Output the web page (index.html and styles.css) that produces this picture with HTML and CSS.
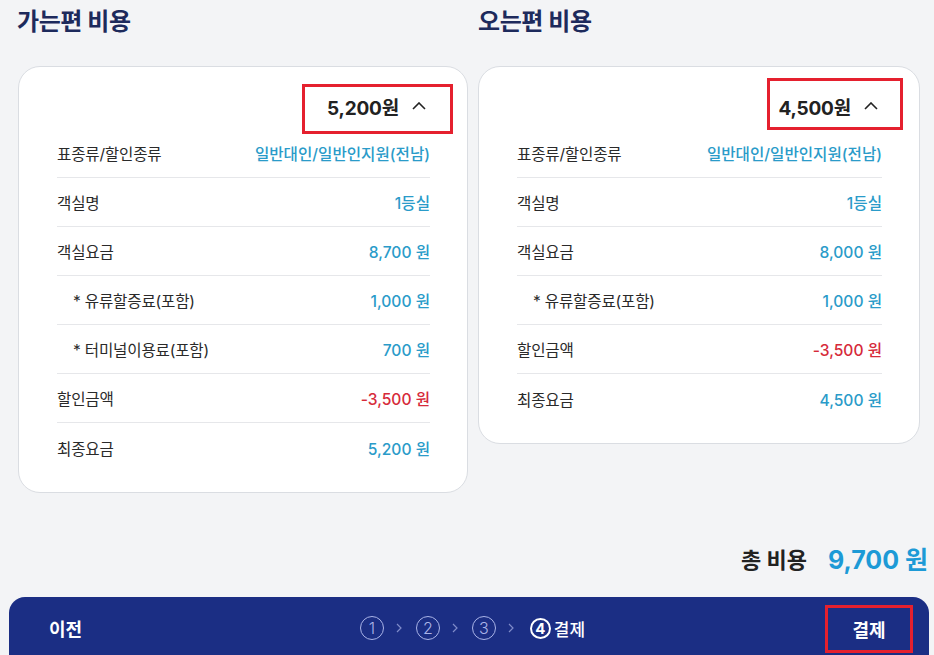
FILE: index.html
```html
<!DOCTYPE html>
<html lang="ko">
<head>
<meta charset="utf-8">
<link rel="stylesheet" href="styles.css">
</head>
<body>
<div class="columns">
  <section class="col col-left">
    <h2 class="title">가는편 비용</h2>
    <div class="card">
      <div class="card-head">
        <button class="toggle">5,200원 <svg class="caret" width="14" height="8" viewBox="0 0 14 8"><path d="M1 7 L7 1 L13 7" fill="none" stroke="#222" stroke-width="1.6"/></svg></button>
        <span class="mark mark-left"></span>
      </div>
      <div class="row"><span class="lbl">표종류/할인종류</span><span class="val">일반대인/일반인지원(전남)</span></div>
      <div class="row"><span class="lbl">객실명</span><span class="val">1등실</span></div>
      <div class="row"><span class="lbl">객실요금</span><span class="val">8,700 원</span></div>
      <div class="row"><span class="lbl sub">* 유류할증료(포함)</span><span class="val">1,000 원</span></div>
      <div class="row"><span class="lbl sub">* 터미널이용료(포함)</span><span class="val">700 원</span></div>
      <div class="row"><span class="lbl">할인금액</span><span class="val neg">-3,500 원</span></div>
      <div class="row"><span class="lbl">최종요금</span><span class="val">5,200 원</span></div>
    </div>
  </section>
  <section class="col col-right">
    <h2 class="title">오는편 비용</h2>
    <div class="card">
      <div class="card-head">
        <button class="toggle">4,500원 <svg class="caret" width="14" height="8" viewBox="0 0 14 8"><path d="M1 7 L7 1 L13 7" fill="none" stroke="#222" stroke-width="1.6"/></svg></button>
        <span class="mark mark-right"></span>
      </div>
      <div class="row"><span class="lbl">표종류/할인종류</span><span class="val">일반대인/일반인지원(전남)</span></div>
      <div class="row"><span class="lbl">객실명</span><span class="val">1등실</span></div>
      <div class="row"><span class="lbl">객실요금</span><span class="val">8,000 원</span></div>
      <div class="row"><span class="lbl sub">* 유류할증료(포함)</span><span class="val">1,000 원</span></div>
      <div class="row"><span class="lbl">할인금액</span><span class="val neg">-3,500 원</span></div>
      <div class="row"><span class="lbl">최종요금</span><span class="val">4,500 원</span></div>
    </div>
  </section>
</div>
<div class="total">
  <span class="total-lbl">총 비용</span>
  <span class="total-val">9,700 원</span>
</div>
<div class="bar">
  <span class="prev">이전</span>
  <div class="steps">
    <span class="step">1</span>
    <svg class="chev" width="6" height="10" viewBox="0 0 6 10"><path d="M1 1 L5 5 L1 9" fill="none" stroke="#7f8bc9" stroke-width="1.2"/></svg>
    <span class="step">2</span>
    <svg class="chev" width="6" height="10" viewBox="0 0 6 10"><path d="M1 1 L5 5 L1 9" fill="none" stroke="#7f8bc9" stroke-width="1.2"/></svg>
    <span class="step">3</span>
    <svg class="chev" width="6" height="10" viewBox="0 0 6 10"><path d="M1 1 L5 5 L1 9" fill="none" stroke="#7f8bc9" stroke-width="1.2"/></svg>
    <span class="step active">4</span><span class="step-name">결제</span>
  </div>
  <div class="next-wrap"><span class="next">결제</span></div>
</div>
</body>
</html>
```
FILE: styles.css
```css
* { box-sizing: border-box; }
html, body { margin: 0; padding: 0; }
body {
  width: 934px;
  height: 655px;
  overflow: hidden;
  background: #f3f4f6;
  font-family: Inter, "Noto Sans CJK KR", sans-serif;
  color: #222;
}
.columns {
  display: grid;
  grid-template-columns: 451px 442px;
  column-gap: 10px;
  align-items: start;
  padding: 6px 0 0 17px;
}
.title {
  margin: 0 0 28px;
  font-size: 24px;
  line-height: 32px;
  font-weight: 700;
  color: #1d2a5c;
  letter-spacing: -0.4px;
}
.col-left .card { margin-left: 1px; }
.card {
  position: relative;
  background: #fff;
  border: 1px solid #dadde2;
  border-radius: 22px;
  padding: 0 37px 20px 38px;
}
.col-right .card { padding-left: 38px; padding-right: 37px; }
.card-head {
  height: 62px;
  padding-top: 19px;
  display: flex;
  justify-content: flex-end;
  align-items: flex-start;
}
.toggle {
  height: 40px;
  display: flex;
  align-items: center;
  gap: 13px;
  padding: 0 4px 0 0;
  border: 0;
  background: none;
  font-family: inherit;
  font-size: 19px;
  font-weight: 700;
  color: #222;
  cursor: pointer;
  letter-spacing: -0.2px;
}
.caret { display: block; }
.mark {
  position: absolute;
  border: 3px solid #e5202e;
}
.mark-left { left: 283px; top: 17px; width: 151px; height: 50px; }
.mark-right { left: 288px; top: 11px; width: 136px; height: 52px; }
.row {
  height: 49px;
  display: flex;
  align-items: center;
  justify-content: space-between;
  border-bottom: 1px solid #e6e7ea;
  font-size: 15.6px;
}
.row:last-child { border-bottom: 0; }
.lbl { color: #2a2a2a; letter-spacing: -0.2px; }
.lbl.sub { padding-left: 16px; }
.val { color: #2a9bc9; font-weight: 500; }
.val.neg { color: #d62a3a; }
.total {
  display: flex;
  justify-content: flex-end;
  align-items: center;
  gap: 21px;
  height: 36px;
  margin-top: 47px;
  padding-right: 6px;
}
.total-lbl { font-size: 22px; font-weight: 700; color: #222; }
.total-val { font-size: 25px; font-weight: 700; color: #1d9ad6; }
.bar {
  margin: 21px 5px 0 9px;
  height: 80px;
  background: #1b2e84;
  border-radius: 16px 16px 0 0;
  display: grid;
  grid-template-columns: 1fr auto 1fr;
  align-items: start;
  padding: 0 16px;
}
.prev {
  height: 62px;
  display: flex;
  align-items: center;
  padding-left: 24px;
  color: #fff;
  font-size: 18px;
  font-weight: 700;
}
.steps {
  height: 62px;
  display: flex;
  align-items: center;
  margin-left: 7px;
}
.step {
  width: 24px;
  height: 24px;
  border-radius: 50%;
  border: 1.3px solid #aab4e8;
  color: #aab4e8;
  display: flex;
  align-items: center;
  justify-content: center;
  font-size: 16px;
  font-weight: 300;
  line-height: 1;
}
.chev { display: block; margin: 0 14px 0 12px; }
.step.active {
  border: 2px solid #fff;
  color: #fff;
  font-weight: 700;
  width: 21px;
  height: 21px;
  font-size: 15px;
  margin-left: 2px;
}
.step-name {
  margin-left: 3px;
  color: #fff;
  font-size: 17px;
  font-weight: 500;
}
.next-wrap {
  display: flex;
  justify-content: flex-end;
  padding-top: 8px;
}
.next {
  width: 88px;
  height: 48px;
  border: 3px solid #e5202e;
  display: flex;
  align-items: center;
  justify-content: center;
  color: #fff;
  font-size: 18px;
  font-weight: 700;
}
```
